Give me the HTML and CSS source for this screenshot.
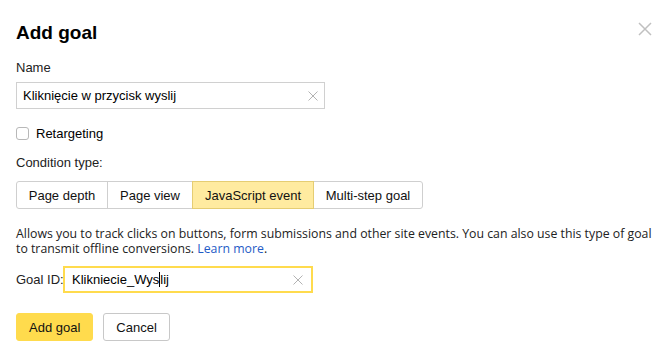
FILE: index.html
```html
<!DOCTYPE html>
<html lang="en">
<head>
    <meta charset="UTF-8">
    <title>Add goal</title>
    <link rel="stylesheet" href="styles.css">
</head>
<body>
    <div class="dialog">
        <button class="close" aria-label="Close">
            <svg width="14" height="14" viewBox="0 0 14 14"><path d="M1 1L13 13M13 1L1 13" stroke="#c0c0c0" stroke-width="1.5"/></svg>
        </button>
        <h1>Add goal</h1>
        <div class="label">Name</div>
        <div class="input name-input">
            <span class="value">Kliknięcie w przycisk wyslij</span>
            <svg class="clear" width="10" height="10" viewBox="0 0 10 10"><path d="M0.5 0.5L9.5 9.5M9.5 0.5L0.5 9.5" stroke="#b3b3b3" stroke-width="1"/></svg>
        </div>
        <label class="check">
            <span class="box"></span>
            <span>Retargeting</span>
        </label>
        <div class="label cond">Condition type:</div>
        <div class="tabs">
            <span class="tab w1">Page depth</span>
            <span class="tab w2">Page view</span>
            <span class="tab w3 active">JavaScript event</span>
            <span class="tab w4">Multi-step goal</span>
        </div>
        <p class="desc">Allows you to track clicks on buttons, form submissions and other site events. You can also use this type of goal to transmit offline conversions. <a href="#">Learn more</a>.</p>
        <div class="goal-row">
            <span class="goal-label">Goal ID:</span>
            <div class="input goal-input">
                <span class="value">Klikniecie_Wys<span class="caret"></span>lij</span>
                <svg class="clear" width="10" height="10" viewBox="0 0 10 10"><path d="M0.5 0.5L9.5 9.5M9.5 0.5L0.5 9.5" stroke="#b3b3b3" stroke-width="1"/></svg>
            </div>
        </div>
        <div class="actions">
            <button class="btn primary">Add goal</button>
            <button class="btn">Cancel</button>
        </div>
    </div>
</body>
</html>
```
FILE: styles.css
```css
* {
    margin: 0;
    padding: 0;
    box-sizing: border-box;
}

body {
    background: #fff;
    font-family: 'Liberation Sans', Arial, sans-serif;
    font-size: 13px;
    color: #000;
}

.dialog {
    position: relative;
    width: 671px;
    height: 358px;
    padding: 22px 16px 0 16px;
}

.close {
    position: absolute;
    top: 22px;
    right: 19px;
    border: none;
    background: none;
    width: 14px;
    height: 14px;
}

.close svg {
    display: block;
}

h1 {
    font-size: 19px;
    font-weight: bold;
    line-height: 22px;
    color: #000;
}

.label {
    margin-top: 16px;
    line-height: 15px;
    color: #222;
}

.input {
    display: flex;
    align-items: center;
    justify-content: space-between;
    height: 27px;
    border: 1px solid #d0d0d0;
    padding: 0 6px 0 6px;
    font-size: 13px;
}

.name-input {
    width: 309px;
    margin-top: 7px;
}

.check {
    display: flex;
    align-items: center;
    gap: 7px;
    margin-top: 17px;
    line-height: 15px;
}

.box {
    width: 13px;
    height: 13px;
    border: 1px solid #b8b8b8;
    border-radius: 3px;
}

.cond {
    margin-top: 14px;
}

.tabs {
    display: flex;
    margin-top: 11px;
    height: 28px;
}

.tab {
    display: flex;
    align-items: center;
    justify-content: center;
    border: 1px solid #cfcfcf;
    margin-left: -1px;
    color: #111;
}

.w1 { width: 92px; }
.w2 { width: 86px; }
.w3 { width: 122px; }
.w4 { width: 110px; }

.tab:first-child {
    margin-left: 0;
    border-radius: 3px 0 0 3px;
}

.tab:last-child {
    border-radius: 0 3px 3px 0;
}

.tab.active {
    background: #ffeba0;
    border-color: #e5cd73;
    position: relative;
}

.desc {
    margin-top: 17px;
    font-family: 'Open Sans', sans-serif;
    font-size: 12.3px;
    line-height: 15px;
    color: #222;
    width: 645px;
}

.desc a {
    color: #1f5bc6;
    text-decoration: none;
}

.goal-row {
    display: flex;
    align-items: center;
    margin-top: 10px;
}

.goal-label {
    flex: none;
    width: 47px;
    white-space: nowrap;
    color: #222;
}

.goal-input {
    width: 250px;
    height: 27px;
    border: 2px solid #ffdb4d;
    padding: 0 8px 0 7px;
}

.caret {
    display: inline-block;
    width: 1px;
    height: 15px;
    background: #000;
    vertical-align: -3px;
}

.actions {
    display: flex;
    gap: 10px;
    margin-top: 20px;
}

.btn {
    height: 28px;
    padding: 0 12px;
    border: 1px solid #c8c8c8;
    border-radius: 3px;
    background: #fff;
    font-family: 'Liberation Sans', Arial, sans-serif;
    font-size: 13px;
    color: #111;
}

.btn.primary {
    background: #ffdb4d;
    border-color: #ffdb4d;
}
```
